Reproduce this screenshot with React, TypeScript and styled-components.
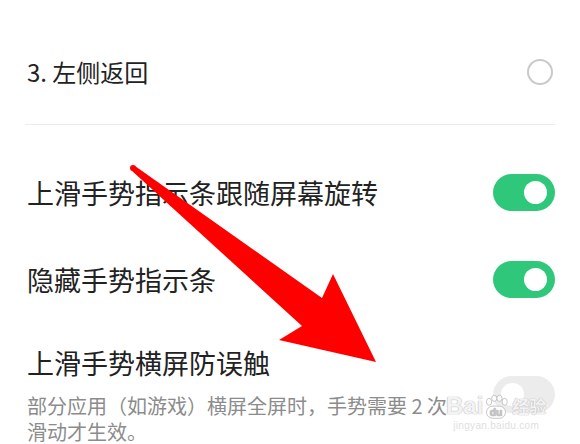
import React from 'react'
import styled, { createGlobalStyle } from 'styled-components'

const GlobalStyle = createGlobalStyle`
  html, body {
    margin: 0;
    padding: 0;
    background: #ffffff;
  }
  body {
    font-family: 'Noto Sans CJK SC', 'Noto Sans', sans-serif;
  }
`

const Page = styled.main`
  position: relative;
  width: 580px;
  height: 444px;
  overflow: hidden;
  background: #ffffff;
  padding-top: 20px;
  box-sizing: border-box;
`

const Row = styled.div<{ $height?: number }>`
  display: flex;
  align-items: center;
  justify-content: space-between;
  height: ${({ $height }) => ($height ? `${$height}px` : 'auto')};
  padding: 0 25px 0 27px;
`

const Divider = styled.div`
  height: 1px;
  margin: 0 25px 24px 25px;
  background: #ececec;
`

const Label = styled.span<{ $size?: number }>`
  font-size: ${({ $size }) => $size ?? 27}px;
  line-height: 28px;
  color: #222222;
`

const TextBlock = styled.div`
  display: flex;
  flex-direction: column;
  max-width: 436px;
  padding-top: 26px;
`

const Desc = styled.p`
  margin: 16px 0 0;
  font-size: 20px;
  line-height: 26px;
  color: #8c8c8c;
`

const Radio = styled.span`
  width: 22px;
  height: 22px;
  border: 2px solid #c9c9c9;
  border-radius: 50%;
  margin-right: 2px;
`

const Toggle = styled.span<{ $on?: boolean }>`
  display: flex;
  align-items: center;
  justify-content: ${({ $on }) => ($on ? 'flex-end' : 'flex-start')};
  width: 62px;
  height: 37px;
  padding: 0 8px;
  box-sizing: border-box;
  border-radius: 19px;
  background: ${({ $on }) => ($on ? '#2fc87a' : '#ececec')};
  flex-shrink: 0;

  &::after {
    content: '';
    width: 23px;
    height: 23px;
    border-radius: 50%;
    background: #ffffff;
  }
`

const ToggleSlot = styled.div`
  align-self: flex-start;
  margin-top: 53px;
`

const Arrow = styled.svg`
  position: absolute;
  left: 0;
  top: 0;
  pointer-events: none;
`

const Watermark = styled.div`
  position: absolute;
  left: 446px;
  top: 392px;
  display: flex;
  flex-direction: column;
  align-items: center;
  pointer-events: none;
`

const MarkLine = styled.div`
  display: flex;
  align-items: flex-end;
  font-family: 'Liberation Sans', 'Noto Sans CJK SC', sans-serif;
  font-weight: 700;
  font-size: 24px;
  line-height: 28px;
  color: rgba(255, 255, 255, 0.85);
  text-shadow: 0 0 1px #b5b5b5, 0 0 1px #b5b5b5;
`

const MarkCn = styled.span`
  font-family: 'Noto Sans CJK SC', sans-serif;
  font-size: 17px;
  margin-left: 3px;
`

const MarkUrl = styled.div`
  font-family: 'Liberation Sans', sans-serif;
  font-size: 10px;
  line-height: 12px;
  color: #e0e0e0;
  letter-spacing: 0.3px;
`

export default function App() {
  return (
    <>
      <GlobalStyle />
      <Page>
        <Row $height={104}>
          <Label $size={24}>3. 左侧返回</Label>
          <Radio />
        </Row>
        <Divider />
        <Row $height={87}>
          <Label>上滑手势指示条跟随屏幕旋转</Label>
          <Toggle $on />
        </Row>
        <Row $height={87}>
          <Label>隐藏手势指示条</Label>
          <Toggle $on />
        </Row>
        <Row>
          <TextBlock>
            <Label>上滑手势横屏防误触</Label>
            <Desc>部分应用（如游戏）横屏全屏时，手势需要 2 次滑动才生效。</Desc>
          </TextBlock>
          <ToggleSlot>
            <Toggle />
          </ToggleSlot>
        </Row>

        <Watermark>
          <MarkLine>
            Bai
            <svg width="26" height="26" viewBox="0 0 30 28">
              <g fill="rgba(255,255,255,0.9)" stroke="#bdbdbd" strokeWidth="1">
                <ellipse cx="7" cy="8" rx="3" ry="4" />
                <ellipse cx="13" cy="4" rx="3" ry="3.5" />
                <ellipse cx="19" cy="4" rx="3" ry="3.5" />
                <ellipse cx="25" cy="8" rx="3" ry="4" />
                <rect x="4" y="13" width="22" height="14" rx="7" />
              </g>
              <text x="15" y="24" textAnchor="middle" fontSize="12" fontFamily="Liberation Sans" fontWeight="700" fill="#c4c4c4">
                du
              </text>
            </svg>
            <MarkCn>经验</MarkCn>
          </MarkLine>
          <MarkUrl>jingyan.baidu.com</MarkUrl>
        </Watermark>

        <Arrow width="580" height="444" viewBox="0 0 580 444">
          <circle cx="133" cy="168" r="3" fill="#fe0000" />
          <polygon
            points="135,166 322,298 333,274 376,362 279,340 302,326 131,170"
            fill="#fe0000"
          />
        </Arrow>
      </Page>
    </>
  )
}
